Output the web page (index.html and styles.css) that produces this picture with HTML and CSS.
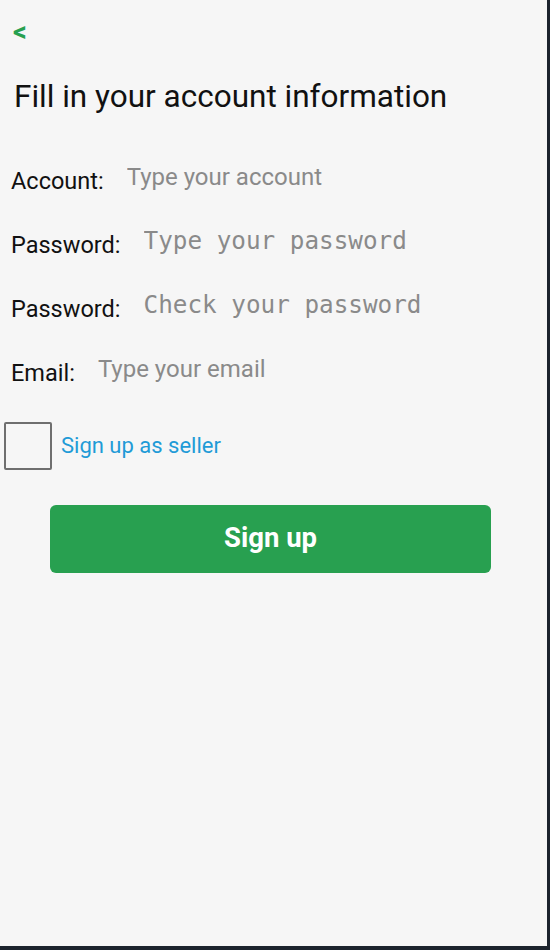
FILE: index.html
```html
<!DOCTYPE html>
<html>
<head>
<meta charset="utf-8">
<link rel="stylesheet" href="styles.css">
</head>
<body>
<div class="screen">
  <div class="back">&lt;</div>
  <h1 class="title">Fill in your account information</h1>
  <div class="form">
    <div class="row">
      <label class="label">Account:</label>
      <input class="field" type="text" placeholder="Type your account">
    </div>
    <div class="row">
      <label class="label">Password:</label>
      <input class="field mono" type="text" placeholder="Type your password">
    </div>
    <div class="row">
      <label class="label">Password:</label>
      <input class="field mono" type="text" placeholder="Check your password">
    </div>
    <div class="row">
      <label class="label">Email:</label>
      <input class="field" type="text" placeholder="Type your email">
    </div>
  </div>
  <div class="seller">
    <span class="box"></span>
    <span class="seller-text">Sign up as seller</span>
  </div>
  <div class="actions">
    <button class="signup">Sign up</button>
  </div>
</div>
</body>
</html>
```

FILE: styles.css
```css
* { box-sizing: border-box; }
html, body { margin: 0; padding: 0; }
body {
  width: 550px;
  height: 950px;
  background: #1c232d;
  font-family: Roboto, "Noto Sans", sans-serif;
  overflow: hidden;
}
.screen {
  width: 547px;
  height: 946px;
  background: #f6f6f6;
  padding-top: 18px;
}
.back {
  margin-left: 13px;
  color: #27a050;
  font-weight: bold;
  font-size: 27px;
  line-height: 28px;
  height: 28px;
}
.title {
  margin: 32px 0 0 14px;
  font-weight: normal;
  font-size: 31.5px;
  line-height: 37px;
  color: #111;
}
.form {
  margin-top: 49px;
  display: flex;
  flex-direction: column;
  gap: 37px;
}
.row {
  display: flex;
  align-items: flex-start;
  gap: 23px;
  padding-left: 11px;
  height: 27px;
}
.label {
  font-size: 23.5px;
  line-height: 27px;
  margin-top: 4px;
  color: #111;
  white-space: nowrap;
}
.field {
  border: none;
  background: transparent;
  outline: none;
  padding: 0;
  margin: 0;
  font-family: Roboto, sans-serif;
  font-size: 24px;
  line-height: 26px;
  height: 26px;
  width: 320px;
}
.field::placeholder { color: #8a8a8a; opacity: 1; }
.field.mono {
  font-family: "DejaVu Sans Mono", monospace;
  font-size: 24.3px;
}
.seller {
  margin-top: 39px;
  display: flex;
  align-items: center;
  gap: 9px;
  padding-left: 4px;
}
.box {
  width: 48px;
  height: 48px;
  border: 2.5px solid #6f6f6f;
  border-radius: 2px;
}
.seller-text {
  color: #1f9bd7;
  font-size: 22px;
  line-height: 26px;
}
.actions {
  margin-top: 35px;
  padding-left: 50px;
}
.signup {
  width: 441px;
  height: 68px;
  border: none;
  border-radius: 6px;
  background: #28a050;
  color: #fff;
  font-family: Roboto, sans-serif;
  font-weight: bold;
  font-size: 27.5px;
  padding: 0 0 4px 0;
}
```
